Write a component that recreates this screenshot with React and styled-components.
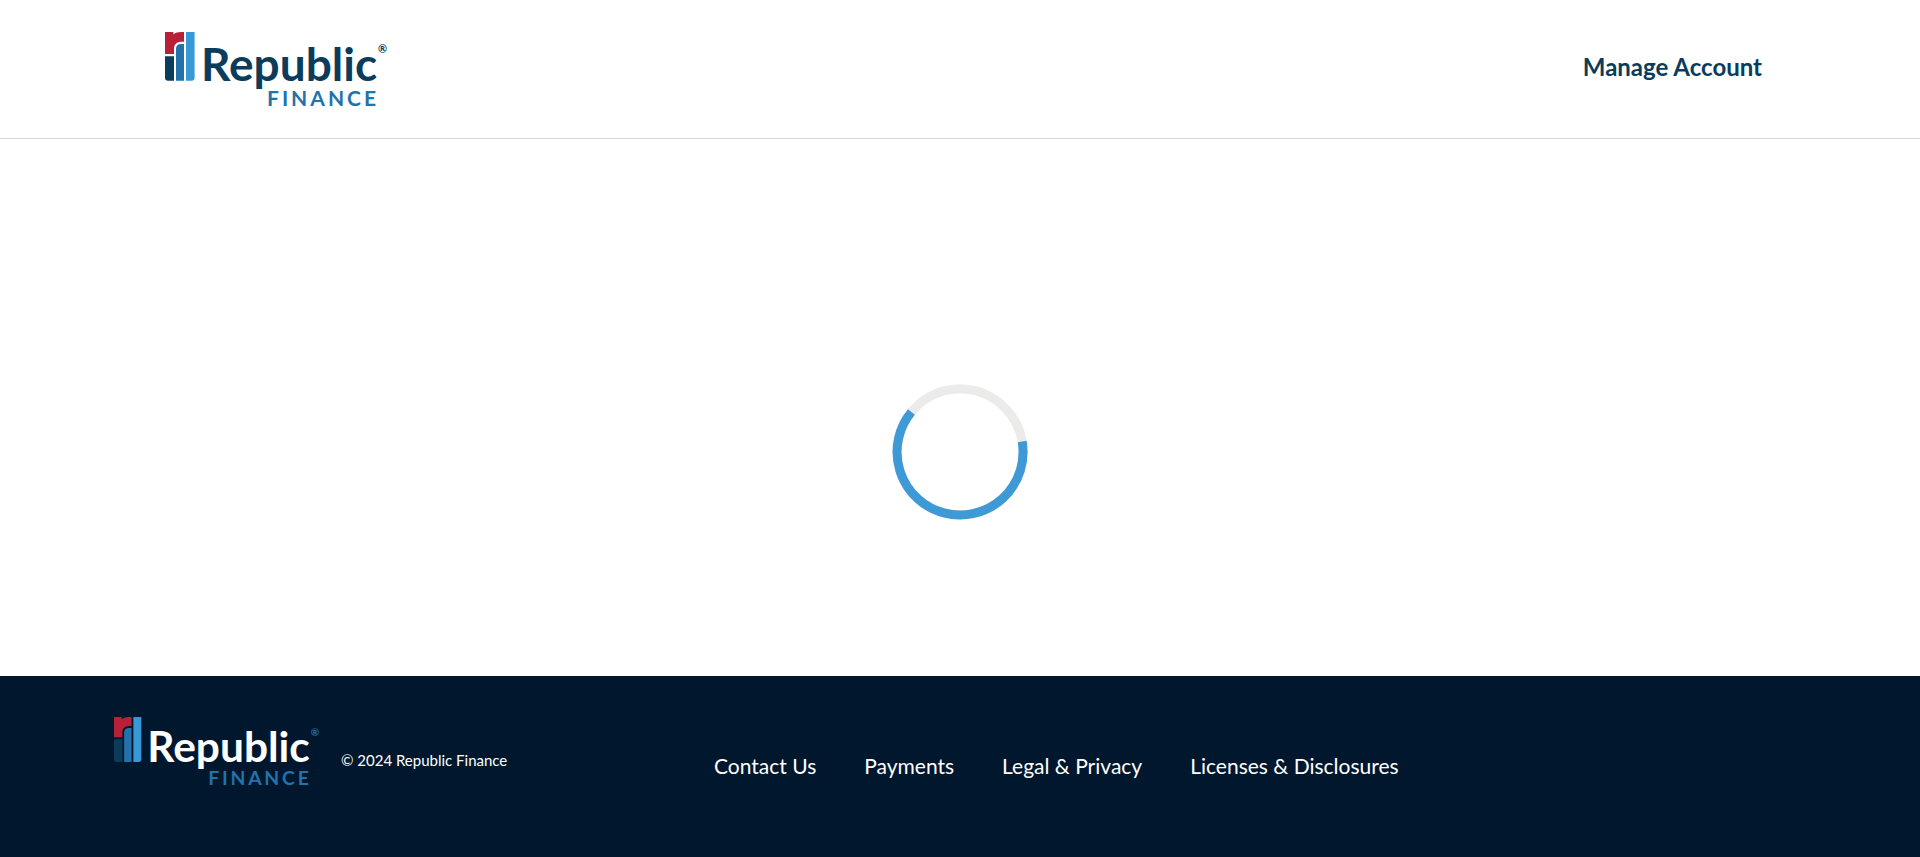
import React from "react";
import styled, { createGlobalStyle } from "styled-components";

const GlobalStyle = createGlobalStyle`
  *, *::before, *::after { box-sizing: border-box; }
  body {
    margin: 0;
    background: #ffffff;
    color: #0c3c5b;
    font-family: Lato, "Open Sans", sans-serif;
  }
`;

const Page = styled.div`
  display: flex;
  flex-direction: column;
  min-height: 100vh;
`;

const Header = styled.header`
  display: flex;
  align-items: flex-start;
  justify-content: space-between;
  padding: 32px 158px 31px 165px;
  border-bottom: 1px solid #d8d8d8;
`;

const LogoLink = styled.a`
  display: block;
  line-height: 0;
`;

const LogoArt = styled.svg`
  display: block;
  width: ${({ $width }) => $width}px;
  height: auto;
  overflow: visible;
  font-family: Lato, "Open Sans", sans-serif;
`;

const AccountLink = styled.a`
  margin-top: 20px;
  color: #0c3c5b;
  font-size: 24px;
  font-weight: 700;
  line-height: 30px;
  text-decoration: none;
`;

const Main = styled.main`
  display: flex;
  flex: 1;
  align-items: flex-start;
  justify-content: center;
  padding: 245px 24px 120px;
`;

const Spinner = styled.svg`
  display: block;
  width: 136px;
  height: 136px;
`;

const Footer = styled.footer`
  display: flex;
  align-items: flex-start;
  padding: 41px 114px 71px;
  background: #00172e;
  color: #ffffff;
`;

const Brand = styled.div`
  display: flex;
  flex: 0 0 600px;
  align-items: flex-start;
  gap: 22px;
`;

const Copyright = styled.p`
  margin: 32px 0 0;
  font-size: 15px;
  line-height: 22px;
`;

const FooterNav = styled.nav`
  display: flex;
  gap: 48px;
  margin-top: 34px;
`;

const FooterLink = styled.a`
  color: #ffffff;
  font-size: 21px;
  line-height: 30px;
  text-decoration: none;
  white-space: nowrap;
`;

function Logo({ width, wordColor, markColor }) {
  return (
    <LogoArt
      $width={width}
      viewBox="0 0 222 75"
      role="img"
      aria-label="Republic Finance"
    >
      <path
        fill="#b82038"
        d="M0 0H8.4V2.4C10.4 .8 13 0 16 0H19V9.8H16C12 10 9.3 12.3 9 16V22H0Z"
      />
      <path fill="#0c3c5b" d="M0 24.2H9V48.7H3Q0 48.7 0 45.7Z" />
      <path fill="#2272ac" d="M11 48.7V17Q11 12 16 12H19V48.7Z" />
      <path fill="#379ad6" d="M21 0H29.6V45.7Q29.6 48.7 26.6 48.7H21Z" />
      <text x="36" y="49" fontSize="46" fontWeight="700" fill={wordColor}>
        Republic
      </text>
      <text x="102" y="74" fontSize="21" fontWeight="700" letterSpacing="3" fill="#2272ac">
        FINANCE
      </text>
      <text x="213" y="21" fontSize="11" fontWeight="700" fill={markColor}>
        ®
      </text>
    </LogoArt>
  );
}

const LINKS = ["Contact Us", "Payments", "Legal & Privacy", "Licenses & Disclosures"];

export default function App() {
  return (
    <Page>
      <GlobalStyle />
      <Header>
        <LogoLink href="#home">
          <Logo width={222} wordColor="#0c3c5b" markColor="#0c3c5b" />
        </LogoLink>
        <AccountLink href="#account">Manage Account</AccountLink>
      </Header>
      <Main>
        <Spinner viewBox="0 0 136 136" role="img" aria-label="Loading">
          <circle cx="68" cy="68" r="63" fill="none" stroke="#ebebea" strokeWidth="9" />
          <path
            d="M130.2 57.6A63 63 0 1 1 19.4 28"
            fill="none"
            stroke="#3d9ad6"
            strokeWidth="9"
          />
        </Spinner>
      </Main>
      <Footer>
        <Brand>
          <LogoLink href="#home">
            <Logo width={205} wordColor="#ffffff" markColor="#2272ac" />
          </LogoLink>
          <Copyright>© 2024 Republic Finance</Copyright>
        </Brand>
        <FooterNav aria-label="Footer">
          {LINKS.map((label) => (
            <FooterLink key={label} href="#">
              {label}
            </FooterLink>
          ))}
        </FooterNav>
      </Footer>
    </Page>
  );
}
